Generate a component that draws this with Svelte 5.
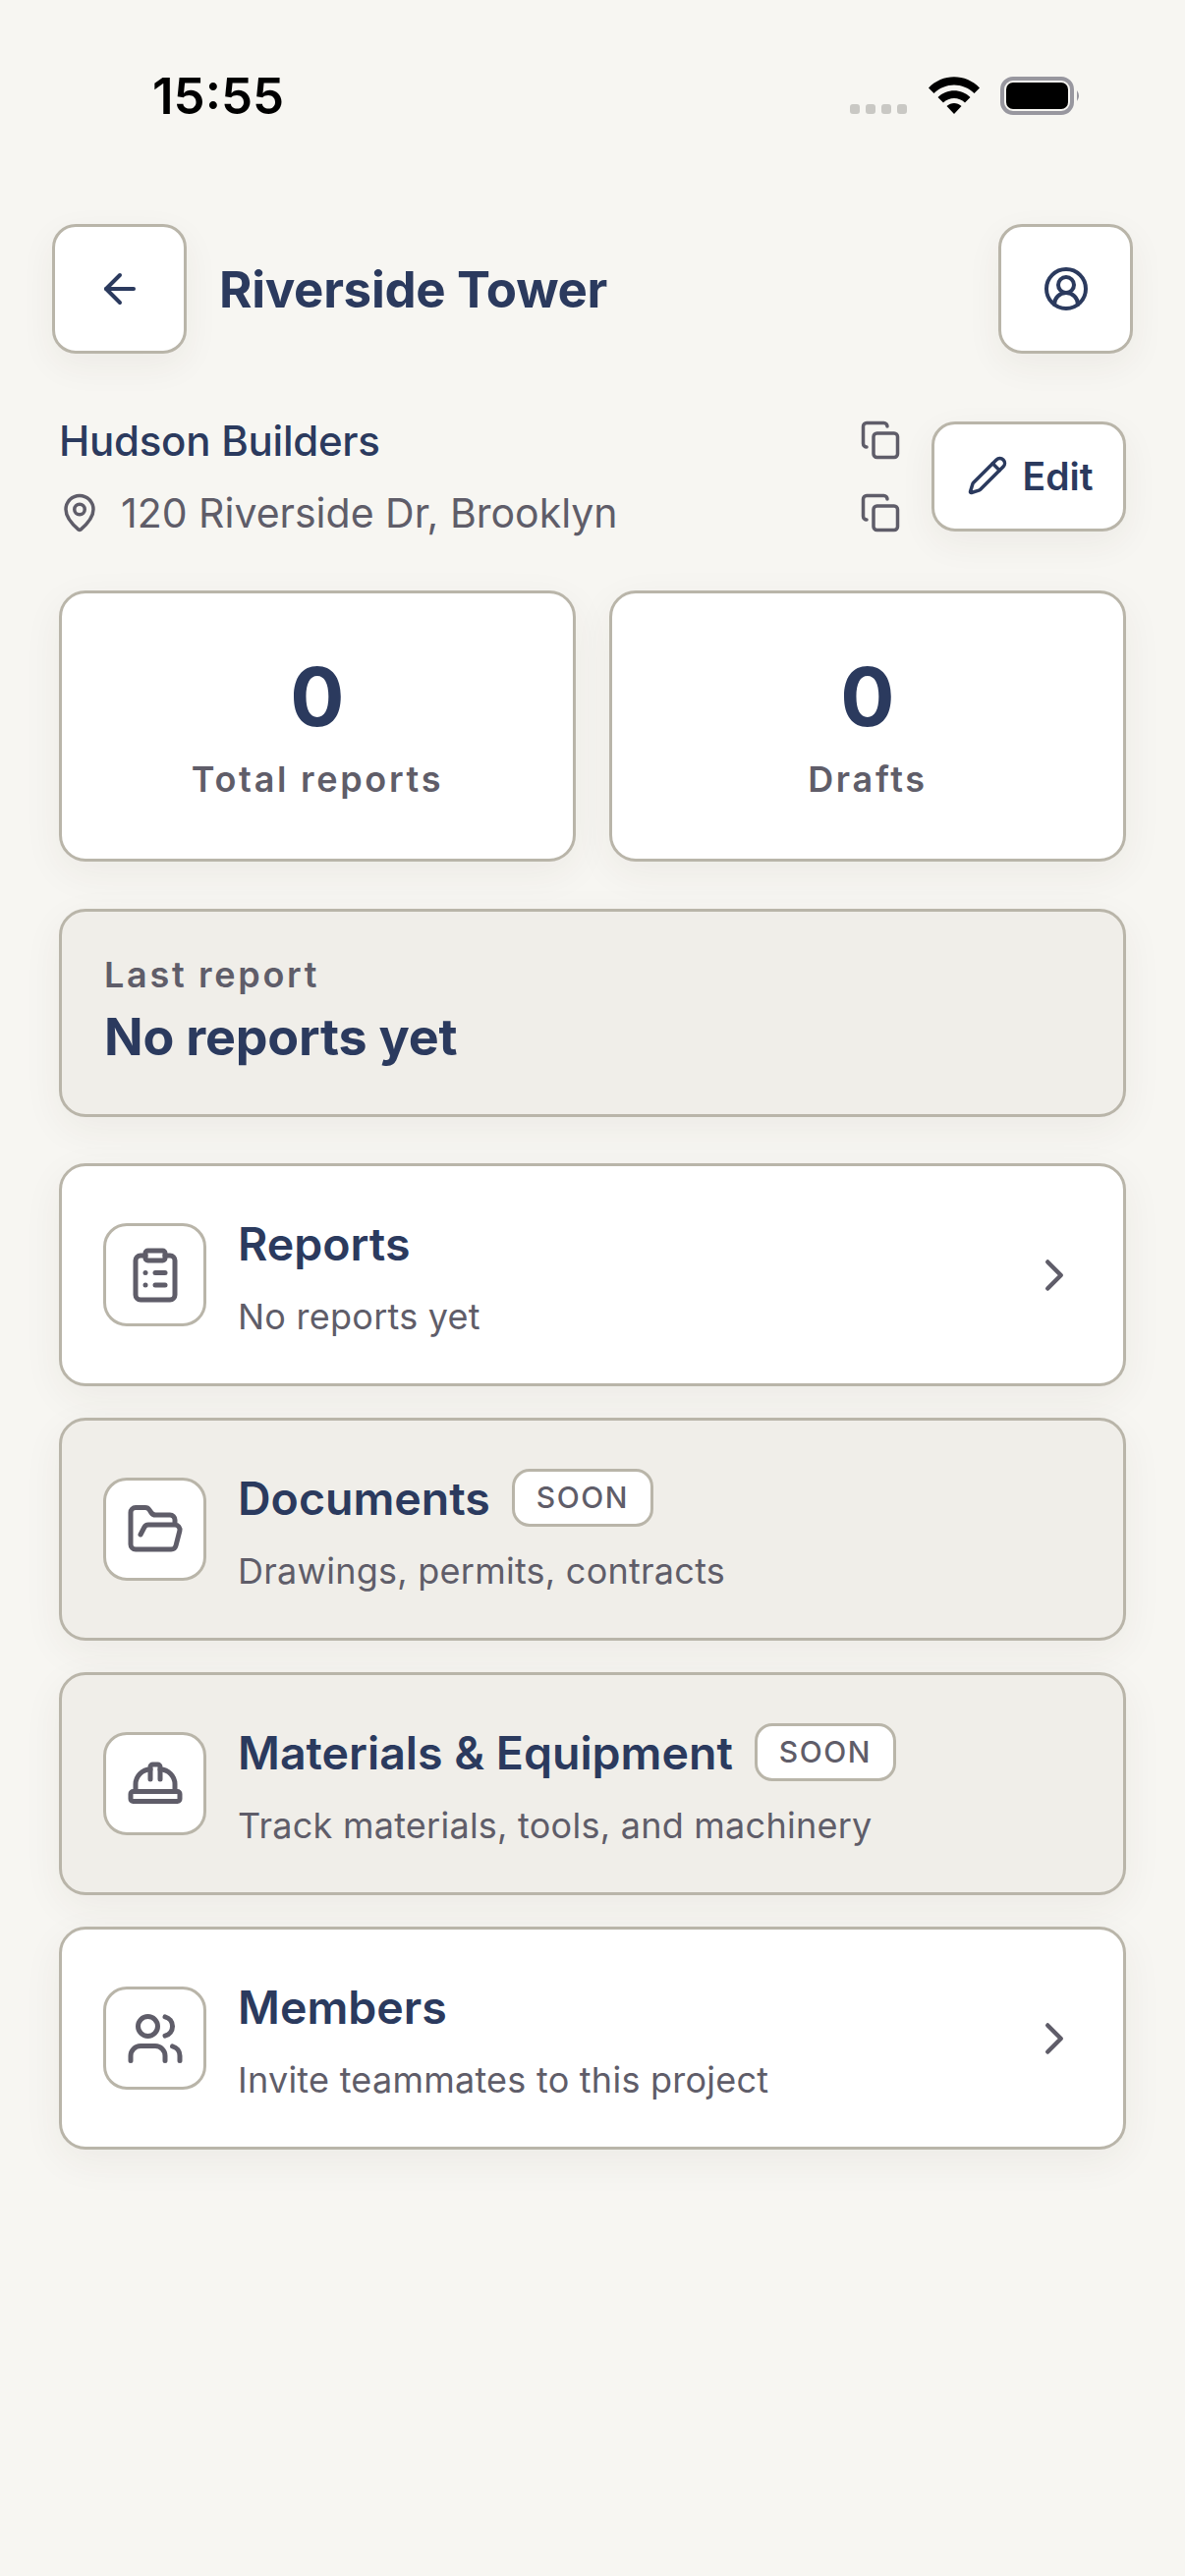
<script>
	const menu = [
		{ title: 'Reports', sub: 'No reports yet', icon: 'clipboard', soon: false },
		{ title: 'Documents', sub: 'Drawings, permits, contracts', icon: 'folder', soon: true },
		{ title: 'Materials & Equipment', sub: 'Track materials, tools, and machinery', icon: 'hat', soon: true },
		{ title: 'Members', sub: 'Invite teammates to this project', icon: 'users', soon: false }
	];
	const stats = [
		{ value: 0, label: 'Total reports' },
		{ value: 0, label: 'Drafts' }
	];
</script>

{#snippet copyIcon()}
	<svg class="icon copy" viewBox="0 0 24 24">
		<rect width="14" height="14" x="8" y="8" rx="2" ry="2" />
		<path d="M4 16c-1.1 0-2-.9-2-2V4c0-1.1.9-2 2-2h10c1.1 0 2 .9 2 2" />
	</svg>
{/snippet}

<div class="page">
	<div class="status">
		<span class="time">15:55</span>
		<div class="status-right">
			<div class="dots"><span></span><span></span><span></span><span></span></div>
			<svg class="wifi" viewBox="0 0 52 39">
				<path d="M0 11.5 C14-3.5 38-3.5 52 11.5 L46.5 17 C35 5.5 17 5.5 5.500 17Z" />
				<path d="M9.500 21 C18.500 12 33.500 12 42.500 21 L37 26.500 C31 20.500 21 20.500 15 26.500Z" />
				<path d="M18.500 30 C23 26 29 26 33.500 30 L26 38Z" />
			</svg>
			<svg class="battery" viewBox="0 0 82 39">
				<rect x="2" y="2" width="71" height="35" rx="11" fill="none" stroke="#98979f" stroke-width="4" />
				<rect x="6" y="6" width="63" height="27" rx="7" fill="#000" />
				<path d="M78 14 Q82 19.500 78 25Z" fill="#98979f" />
			</svg>
		</div>
	</div>

	<header>
		<button class="square">
			<svg class="icon nav" viewBox="0 0 24 24"><path d="m12 19-7-7 7-7" /><path d="M19 12H5" /></svg>
		</button>
		<h1>Riverside Tower</h1>
		<button class="square">
			<svg class="icon nav" viewBox="0 0 24 24">
				<path d="M18 20a6 6 0 0 0-12 0" />
				<circle cx="12" cy="10" r="4" />
				<circle cx="12" cy="12" r="10" />
			</svg>
		</button>
	</header>

	<section class="info">
		<div class="lines">
			<div class="line">
				<span class="company">Hudson Builders</span>
				{@render copyIcon()}
			</div>
			<div class="line">
				<span class="address">
					<svg class="icon pin" viewBox="0 0 24 24">
						<path d="M20 10c0 4.993-5.539 10.193-7.399 11.799a1 1 0 0 1-1.202 0C9.539 20.193 4 14.993 4 10a8 8 0 0 1 16 0" />
						<circle cx="12" cy="10" r="3" />
					</svg>
					120 Riverside Dr, Brooklyn
				</span>
				{@render copyIcon()}
			</div>
		</div>
		<button class="edit">
			<svg class="icon pencil" viewBox="0 0 24 24">
				<path d="M21.174 6.812a1 1 0 0 0-3.986-3.987L3.842 16.174a2 2 0 0 0-.5.83l-1.321 4.352a.5.5 0 0 0 .623.622l4.353-1.32a2 2 0 0 0 .83-.497z" />
				<path d="m15 5 4 4" />
			</svg>
			Edit
		</button>
	</section>

	<section class="stats">
		{#each stats as stat}
			<div class="card stat">
				<div class="value">{stat.value}</div>
				<div class="caption">{stat.label}</div>
			</div>
		{/each}
	</section>

	<section class="card muted last">
		<div class="caption">Last report</div>
		<div class="last-title">No reports yet</div>
	</section>

	<nav class="menu">
		{#each menu as item}
			<div class="card row" class:muted={item.soon}>
				<div class="icon-box">
					<svg class="icon big" viewBox="0 0 24 24">
						{#if item.icon === 'clipboard'}
							<rect width="8" height="4" x="8" y="2" rx="1" ry="1" />
							<path d="M16 4h2a2 2 0 0 1 2 2v14a2 2 0 0 1-2 2H6a2 2 0 0 1-2-2V6a2 2 0 0 1 2-2h2" />
							<path d="M12 11h4" />
							<path d="M12 16h4" />
							<path d="M8 11h.01" />
							<path d="M8 16h.01" />
						{:else if item.icon === 'folder'}
							<path d="m6 14 1.500-2.900A2 2 0 0 1 9.240 10H20a2 2 0 0 1 1.940 2.500l-1.540 6a2 2 0 0 1-1.950 1.500H4a2 2 0 0 1-2-2V5a2 2 0 0 1 2-2h3.900a2 2 0 0 1 1.690.9l.81 1.200a2 2 0 0 0 1.670.9H18a2 2 0 0 1 2 2v2" />
						{:else if item.icon === 'hat'}
							<path d="M10 10V5a1 1 0 0 1 1-1h2a1 1 0 0 1 1 1v5" />
							<path d="M14 6a6 6 0 0 1 6 6v3" />
							<path d="M4 15v-3a6 6 0 0 1 6-6" />
							<rect x="2" y="15" width="20" height="4" rx="1" />
						{:else}
							<path d="M16 21v-2a4 4 0 0 0-4-4H6a4 4 0 0 0-4 4v2" />
							<circle cx="9" cy="7" r="4" />
							<path d="M22 21v-2a4 4 0 0 0-3-3.870" />
							<path d="M16 3.130a4 4 0 0 1 0 7.750" />
						{/if}
					</svg>
				</div>
				<div class="row-text">
					<div class="row-title">
						<span>{item.title}</span>
						{#if item.soon}<span class="soon">SOON</span>{/if}
					</div>
					<div class="row-sub">{item.sub}</div>
				</div>
				{#if !item.soon}
					<svg class="icon chevron" viewBox="0 0 24 24"><path d="m9 18 6-6-6-6" /></svg>
				{/if}
			</div>
		{/each}
	</nav>
</div>

<style>
	:global(body) {
		margin: 0;
		background: #f7f6f2;
	}

	.page {
		box-sizing: border-box;
		min-height: 2622px;
		padding: 0 60px;
		font-family: Inter, 'Liberation Sans', sans-serif;
		color: #2b3a5e;
		background: #f7f6f2;
	}

	/* status bar */
	.status {
		display: flex;
		justify-content: space-between;
		align-items: flex-start;
		height: 228px;
		padding: 71px 46px 0 95px;
		box-sizing: border-box;
	}

	.time {
		font-size: 51px;
		font-weight: 600;
		line-height: 54px;
		color: #000;
	}

	.status-right {
		display: flex;
		align-items: flex-end;
		margin-top: 7px;
		height: 39px;
	}

	.dots {
		display: flex;
		gap: 6px;
		margin-right: 22px;
		margin-bottom: 1px;
	}

	.dots span {
		width: 10px;
		height: 10px;
		border-radius: 3px;
		background: #c9c8c4;
	}

	.wifi {
		width: 52px;
		height: 39px;
		fill: #000;
		margin-right: 21px;
	}

	.battery {
		width: 82px;
		height: 39px;
	}

	/* icons */
	.icon {
		fill: none;
		stroke: currentColor;
		stroke-width: 2;
		stroke-linecap: round;
		stroke-linejoin: round;
		flex-shrink: 0;
	}

	.nav {
		width: 48px;
		height: 48px;
	}

	.copy {
		width: 42px;
		height: 42px;
		color: #5f5d69;
		margin: -2px -2px -2px 0;
	}

	.pin {
		width: 42px;
		height: 42px;
		color: #5f5d69;
	}

	.pencil {
		width: 42px;
		height: 42px;
	}

	.big {
		width: 60px;
		height: 60px;
		color: #5f5d69;
	}

	.chevron {
		width: 54px;
		height: 54px;
		color: #5f5d69;
	}

	/* header */
	header {
		display: flex;
		align-items: center;
		gap: 33px;
		margin: 0 -7px;
	}

	h1 {
		flex: 1;
		margin: 0;
		font-size: 51px;
		font-weight: 700;
		letter-spacing: -0.3px;
	}

	button {
		font-family: inherit;
		color: inherit;
		background: #fff;
		border: 3px solid #b9b5a9;
		border-radius: 24px;
		box-shadow: 0 12px 36px rgba(60, 55, 40, 0.06);
	}

	.square {
		display: flex;
		align-items: center;
		justify-content: center;
		width: 137px;
		height: 132px;
		padding: 0;
	}

	/* company + address */
	.info {
		display: flex;
		align-items: center;
		gap: 33px;
		margin-top: 69px;
	}

	.lines {
		flex: 1;
		display: flex;
		flex-direction: column;
		gap: 36px;
	}

	.line {
		display: flex;
		align-items: center;
		justify-content: space-between;
		height: 38px;
	}

	.company {
		font-size: 42px;
		font-weight: 500;
		letter-spacing: -0.25px;
	}

	.address {
		display: flex;
		align-items: center;
		gap: 21px;
		font-size: 41px;
		color: #5f5d69;
	}

	.edit {
		display: flex;
		align-items: center;
		justify-content: center;
		gap: 15px;
		width: 198px;
		height: 112px;
		padding: 0 0 2px 2px;
		font-size: 39px;
		font-weight: 600;
	}

	/* stats */
	.stats {
		display: grid;
		grid-template-columns: 1fr 1fr;
		gap: 34px;
		margin-top: 60px;
	}

	.card {
		box-sizing: border-box;
		background: #fff;
		border: 3px solid #b9b5a9;
		border-radius: 27px;
		box-shadow: 0 12px 40px rgba(60, 55, 40, 0.06);
	}

	.card.muted {
		background: #f0eee9;
	}

	.stat {
		display: flex;
		flex-direction: column;
		align-items: center;
		justify-content: center;
		height: 276px;
		padding-top: 1px;
	}

	.value {
		font-size: 82px;
		font-weight: 700;
		line-height: 100px;
		margin-bottom: 11px;
		margin-top: -5px;
	}

	.caption {
		font-size: 36px;
		font-weight: 600;
		letter-spacing: 2.7px;
		color: #5f5d69;
	}

	/* last report */
	.last {
		height: 212px;
		margin-top: 48px;
		padding: 42px 43px;
	}

	.last-title {
		font-size: 52px;
		font-weight: 700;
		letter-spacing: -0.2px;
		margin-top: 10px;
	}

	/* menu */
	.menu {
		display: flex;
		flex-direction: column;
		gap: 32px;
		margin-top: 47px;
	}

	.row {
		display: flex;
		align-items: center;
		gap: 32px;
		height: 227px;
		padding: 0 43px 0 42px;
	}

	.icon-box {
		display: flex;
		align-items: center;
		justify-content: center;
		box-sizing: border-box;
		width: 105px;
		height: 105px;
		background: #fff;
		border: 3px solid #b9b5a9;
		border-radius: 24px;
		flex-shrink: 0;
	}

	.row-text {
		flex: 1;
		display: flex;
		flex-direction: column;
		gap: 23px;
		padding-top: 3px;
	}

	.row-title {
		display: flex;
		align-items: center;
		gap: 22px;
		font-size: 46.5px;
		font-weight: 600;
		line-height: 58px;
	}

	.soon {
		box-sizing: border-box;
		height: 59px;
		padding: 0 22px;
		font-size: 30px;
		font-weight: 500;
		line-height: 53px;
		letter-spacing: 1.5px;
		color: #5f5d69;
		background: #fff;
		border: 3px solid #b9b5a9;
		border-radius: 18px;
	}

	.row-sub {
		font-size: 36px;
		line-height: 44px;
		letter-spacing: 0.25px;
		color: #5f5d69;
	}
</style>
